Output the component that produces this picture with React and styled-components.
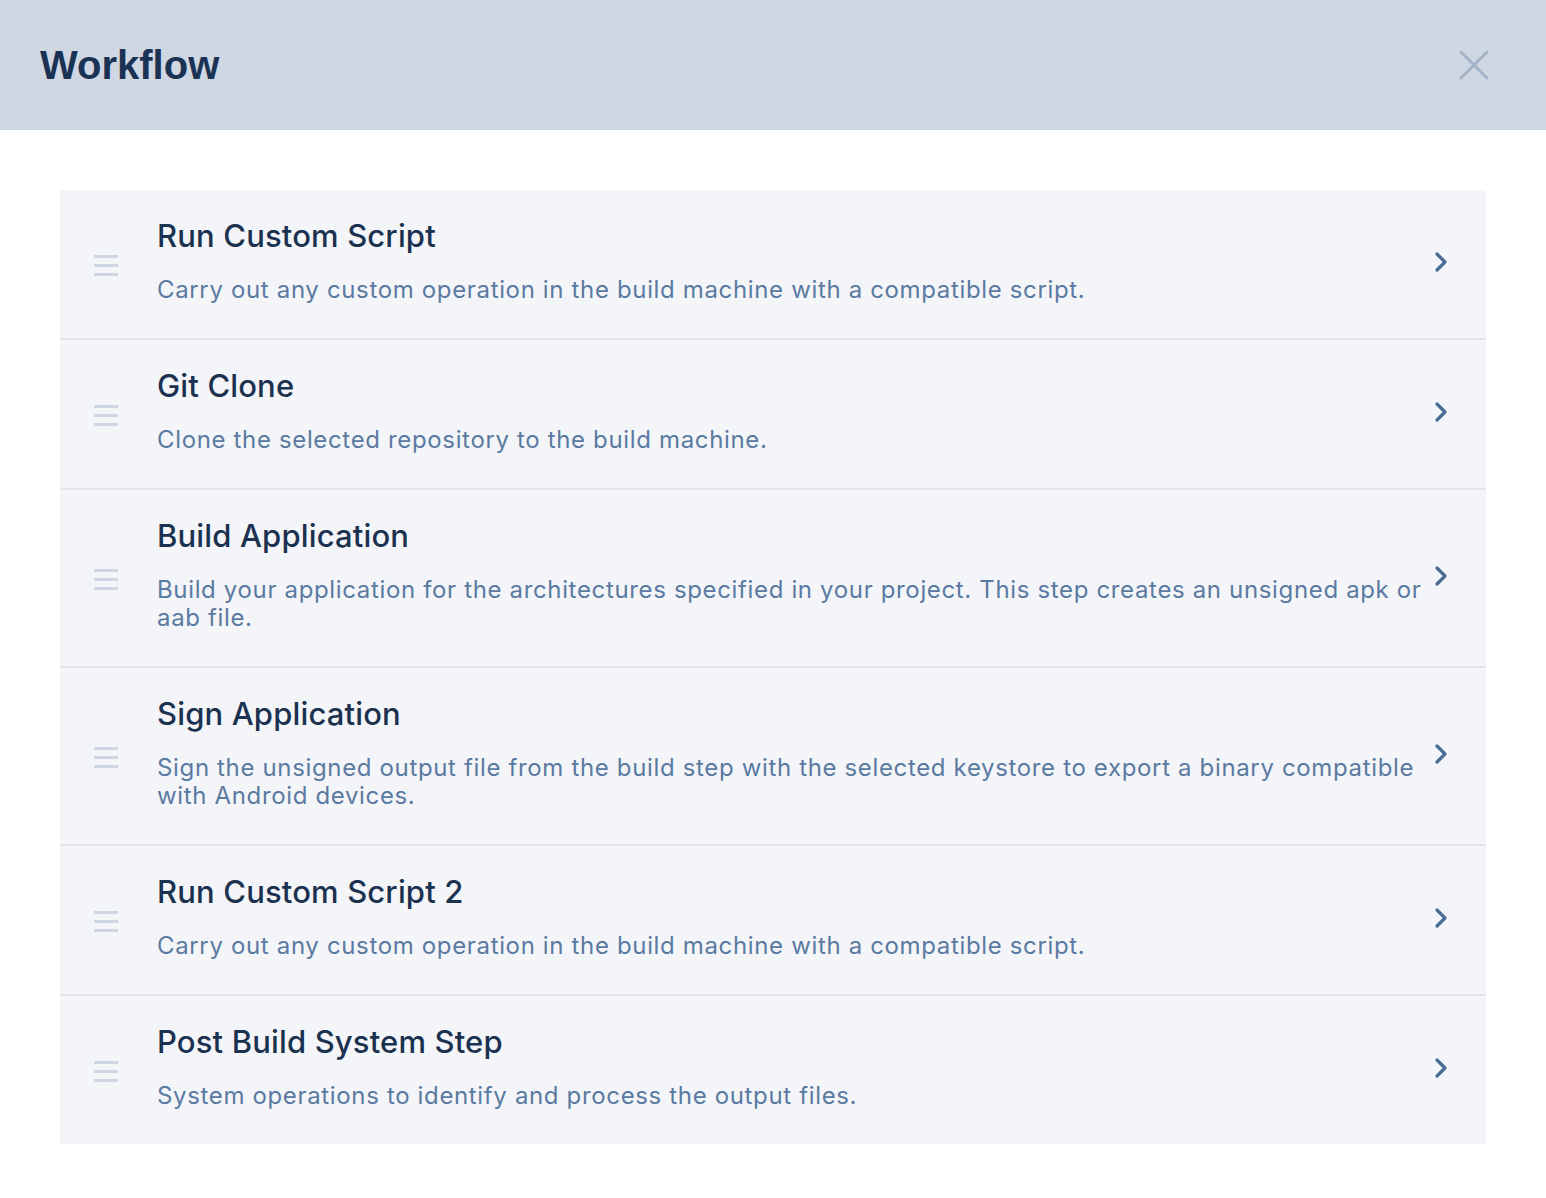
import React from 'react';
import styled, { createGlobalStyle } from 'styled-components';

const GlobalStyle = createGlobalStyle`
  html, body {
    margin: 0;
    padding: 0;
    background: #ffffff;
    font-family: 'Liberation Sans', Arial, sans-serif;
  }
`;

const Page = styled.div`
  width: 1546px;
  min-height: 1198px;
  background: #ffffff;
`;

const Header = styled.header`
  height: 130px;
  background: #cfd7e2;
  display: flex;
  align-items: center;
  justify-content: space-between;
  padding: 0 56px 0 40px;
  box-sizing: border-box;
`;

const Title = styled.h1`
  margin: 0;
  font-size: 40px;
  font-weight: 700;
  color: #1a3355;
  line-height: 1;
`;

const CloseButton = styled.button`
  width: 32px;
  height: 32px;
  padding: 0;
  border: none;
  background: transparent;
  cursor: pointer;
  display: flex;
  align-items: center;
  justify-content: center;
`;

const StepList = styled.ul`
  list-style: none;
  margin: 60px 60px 0 60px;
  padding: 0;
  background: #f4f5f8;
`;

const StepRow = styled.li`
  display: flex;
  align-items: center;
  padding: 27px 38px 34px 34px;
  border-bottom: 2px solid #e3e5e9;

  &:last-child {
    border-bottom: none;
  }
`;

const Handle = styled.div`
  width: 24px;
  display: flex;
  flex-direction: column;
  gap: 6px;
  margin-right: 39px;
  margin-top: 10px;

  span {
    display: block;
    height: 3px;
    background: #cdd6e2;
  }
`;

const StepText = styled.div`
  flex: 1;
  min-width: 0;
`;

const StepName = styled.div`
  font-family: Inter, sans-serif;
  font-weight: 500;
  font-size: 31px;
  letter-spacing: 0.15px;
  line-height: 38px;
  color: #1b3150;
  margin-bottom: 21px;
`;

const StepDesc = styled.div`
  font-family: Inter, sans-serif;
  font-size: 24px;
  letter-spacing: 0.65px;
  line-height: 28px;
  color: #5a7aa2;
  padding-right: 8px;
`;

const Chevron = styled.div`
  width: 14px;
  display: flex;
  justify-content: center;
  margin-top: 3px;
`;

const steps = [
  {
    name: 'Run Custom Script',
    desc: 'Carry out any custom operation in the build machine with a compatible script.',
  },
  {
    name: 'Git Clone',
    desc: 'Clone the selected repository to the build machine.',
  },
  {
    name: 'Build Application',
    desc: 'Build your application for the architectures specified in your project. This step creates an unsigned apk or aab file.',
  },
  {
    name: 'Sign Application',
    desc: 'Sign the unsigned output file from the build step with the selected keystore to export a binary compatible with Android devices.',
  },
  {
    name: 'Run Custom Script 2',
    desc: 'Carry out any custom operation in the build machine with a compatible script.',
  },
  {
    name: 'Post Build System Step',
    desc: 'System operations to identify and process the output files.',
  },
];

export default function App() {
  return (
    <Page>
      <GlobalStyle />
      <Header>
        <Title>Workflow</Title>
        <CloseButton aria-label="Close">
          <svg width="30" height="30" viewBox="0 0 30 30">
            <path d="M2 2 L28 28 M28 2 L2 28" stroke="#a3b4c8" strokeWidth="3" strokeLinecap="round" />
          </svg>
        </CloseButton>
      </Header>
      <StepList>
        {steps.map(step => (
          <StepRow key={step.name}>
            <Handle>
              <span />
              <span />
              <span />
            </Handle>
            <StepText>
              <StepName>{step.name}</StepName>
              <StepDesc>{step.desc}</StepDesc>
            </StepText>
            <Chevron>
              <svg width="14" height="22" viewBox="0 0 14 22">
                <path d="M3 3 L11 11 L3 19" fill="none" stroke="#4a6c96" strokeWidth="3.2" strokeLinecap="round" strokeLinejoin="round" />
              </svg>
            </Chevron>
          </StepRow>
        ))}
      </StepList>
    </Page>
  );
}
